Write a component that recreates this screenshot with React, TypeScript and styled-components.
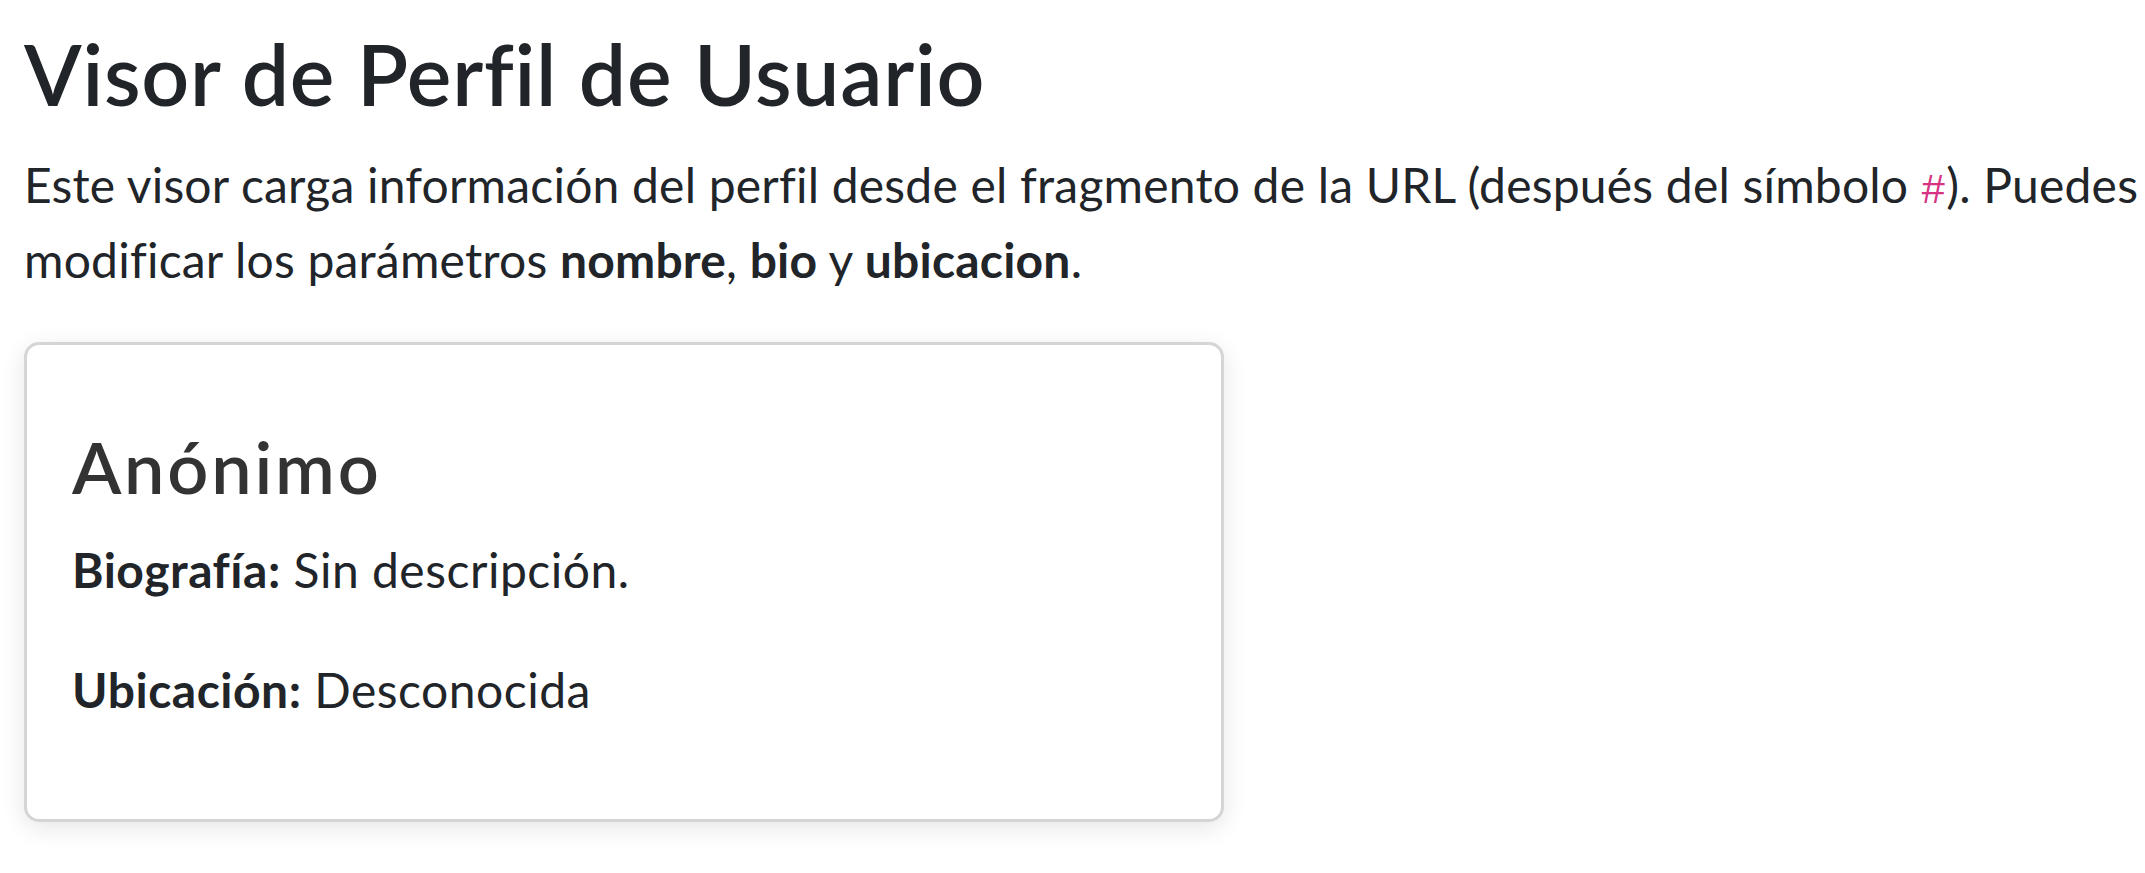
import React from 'react';
import styled, { createGlobalStyle } from 'styled-components';

const GlobalStyle = createGlobalStyle`
  * {
    box-sizing: border-box;
  }

  body {
    margin: 0;
    background: #fff;
    color: #212529;
    font-family: 'Lato', 'Noto Sans', sans-serif;
    font-size: 48px;
    line-height: 1.5;
  }
`;

const Page = styled.main`
  padding: 24px 0 24px 24px;
`;

const Title = styled.h1`
  margin: 0 0 24px;
  font-size: 84px;
  font-weight: 600;
  line-height: 1.2;
  letter-spacing: 0.75px;
  color: #212529;
`;

const Intro = styled.p`
  margin: 0 0 46px;
  letter-spacing: 0.2px;
`;

const Code = styled.code`
  font-family: 'Liberation Mono', monospace;
  font-size: 0.875em;
  color: #d63384;
`;

const Card = styled.section`
  width: 1200px;
  padding: 45px;
  border: 3px solid #d5d5d5;
  border-radius: 15px;
  background: #fff;
  box-shadow: 0 6px 24px rgba(0, 0, 0, 0.1);
`;

const Name = styled.h2`
  margin: 33px 0 25px;
  font-size: 72px;
  font-weight: 600;
  line-height: 1.2;
  letter-spacing: 2.8px;
  color: #333;
`;

const Field = styled.p`
  margin: 0 0 48px;
  letter-spacing: 0.5px;
`;

interface Profile {
  nombre: string;
  bio: string;
  ubicacion: string;
}

function ProfileCard({ nombre, bio, ubicacion }: Profile) {
  return (
    <Card>
      <Name>{nombre}</Name>
      <Field>
        <strong>Biografía:</strong> {bio}
      </Field>
      <Field>
        <strong>Ubicación:</strong> {ubicacion}
      </Field>
    </Card>
  );
}

export default function App() {
  return (
    <>
      <GlobalStyle />
      <Page>
        <Title>Visor de Perfil de Usuario</Title>
        <Intro>
          Este visor carga información del perfil desde el fragmento de la URL (después del símbolo{' '}
          <Code>#</Code>). Puedes modificar los parámetros <strong>nombre</strong>, <strong>bio</strong> y{' '}
          <strong>ubicacion</strong>.
        </Intro>
        <ProfileCard nombre="Anónimo" bio="Sin descripción." ubicacion="Desconocida" />
      </Page>
    </>
  );
}
